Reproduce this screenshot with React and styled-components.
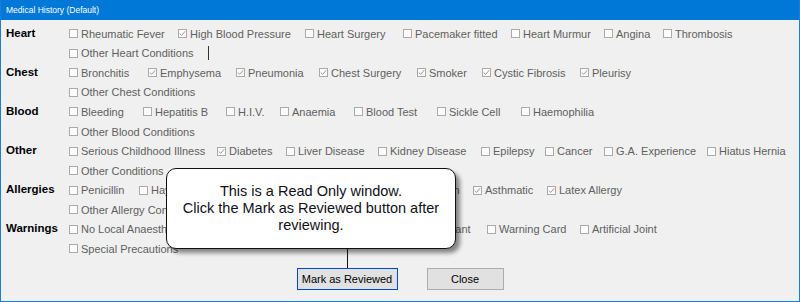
import React from 'react';
import styled, { createGlobalStyle } from 'styled-components';

const GlobalStyle = createGlobalStyle`
    html, body {
        margin: 0;
        padding: 0;
        background: #f0f0f0;
    }
`;

const Window = styled.div`
    position: relative;
    width: 800px;
    height: 302px;
    box-sizing: border-box;
    border: 1px solid #1a7fd4;
    border-top: none;
    background: #f0f0f0;
    font-family: "Liberation Sans", Arial, sans-serif;
    overflow: hidden;
`;

const TitleBar = styled.div`
    height: 20px;
    margin: 0 -1px;
    background: #0078d7;
    color: #fff;
    font-size: 8.5px;
    line-height: 20px;
    padding-left: 6px;
`;

const Content = styled.div`
    padding: 4px 0 0 5px;
`;

const Section = styled.div`
    display: grid;
    grid-template-columns: 63px 1fr;
`;

const SectionLabel = styled.div`
    font-size: 11.5px;
    font-weight: bold;
    color: #000;
    height: 19.55px;
    line-height: 19.55px;
`;

const Lines = styled.div`
    display: flex;
    flex-direction: column;
`;

const Line = styled.div`
    display: flex;
    align-items: center;
    height: 19.55px;
`;

const Item = styled.label`
    display: flex;
    align-items: center;
    flex: 0 0 auto;
    width: ${(p) => (p.$w ? `${p.$w}px` : 'auto')};
    font-size: 11px;
    color: #5f5f5f;
    white-space: nowrap;
`;

const Box = styled.span`
    display: inline-flex;
    align-items: center;
    justify-content: center;
    width: 9px;
    height: 9px;
    box-sizing: border-box;
    border: 1px solid #aaaaaa;
    background: #fbfbfb;
    margin-right: 3px;
`;

const Caret = styled.span`
    display: inline-block;
    width: 1px;
    height: 14px;
    margin-left: 14px;
    background: #333;
`;

const ButtonRow = styled.div`
    display: flex;
    justify-content: center;
    gap: 29px;
    margin-top: 9px;
    padding-right: 5px;
`;

const Button = styled.button`
    width: ${(p) => p.$w}px;
    height: 22px;
    box-sizing: border-box;
    background: #e1e1e1;
    border: 1px solid ${(p) => (p.$focused ? '#0046d5' : '#adadad')};
    box-shadow: ${(p) => (p.$focused ? 'inset 0 0 0 1px #e1e1e1' : 'none')};
    font-family: "Liberation Sans", Arial, sans-serif;
    font-size: 11px;
    color: #000;
    padding: 0;
`;

const Callout = styled.div`
    position: absolute;
    left: 165px;
    top: 168px;
    width: 290px;
    height: 81px;
    box-sizing: border-box;
    background: #fff;
    border: 1px solid #111;
    border-radius: 10px;
    box-shadow: 4px 4px 4px rgba(0, 0, 0, 0.45);
    display: flex;
    align-items: center;
    justify-content: center;
    text-align: center;
    font-size: 14.5px;
    line-height: 17px;
    color: #101020;
    padding: 0 6px;
`;

const Tail = styled.div`
    position: absolute;
    left: 346px;
    top: 249px;
    width: 1px;
    height: 19px;
    background: #111;
`;

const Tick = () => (
    <svg width="7" height="7" viewBox="0 0 7 7">
        <path d="M0.8 3.6 L2.7 5.4 L6.2 1.2" fill="none" stroke="#9a9a9a" strokeWidth="1" />
    </svg>
);

const sections = [
    {
        label: 'Heart',
        lines: [
            [
                ['Rheumatic Fever', 0, 109],
                ['High Blood Pressure', 1, 127],
                ['Heart Surgery', 0, 98],
                ['Pacemaker fitted', 0, 108],
                ['Heart Murmur', 0, 93],
                ['Angina', 0, 59],
                ['Thrombosis', 0],
            ],
            [['Other Heart Conditions', 0]],
        ],
        caret: true,
    },
    {
        label: 'Chest',
        lines: [
            [
                ['Bronchitis', 0, 79],
                ['Emphysema', 1, 88],
                ['Pneumonia', 1, 83],
                ['Chest Surgery', 1, 98],
                ['Smoker', 1, 65],
                ['Cystic Fibrosis', 1, 98],
                ['Pleurisy', 1],
            ],
            [['Other Chest Conditions', 0]],
        ],
    },
    {
        label: 'Blood',
        lines: [
            [
                ['Bleeding', 0, 74],
                ['Hepatitis B', 0, 83],
                ['H.I.V.', 0, 54],
                ['Anaemia', 0, 74],
                ['Blood Test', 0, 83],
                ['Sickle Cell', 0, 84],
                ['Haemophilia', 0],
            ],
            [['Other Blood Conditions', 0]],
        ],
    },
    {
        label: 'Other',
        lines: [
            [
                ['Serious Childhood Illness', 0, 148],
                ['Diabetes', 1, 69],
                ['Liver Disease', 0, 92],
                ['Kidney Disease', 0, 103],
                ['Epilepsy', 0, 64],
                ['Cancer', 0, 59],
                ['G.A. Experience', 0, 103],
                ['Hiatus Hernia', 0],
            ],
            [['Other Conditions', 0]],
        ],
    },
    {
        label: 'Allergies',
        lines: [
            [
                ['Penicillin', 0, 70],
                ['Hay Fever', 0, 80],
                ['Elastoplast', 0, 88],
                ['Iodine', 0, 107],
                ['Aspirin', 0, 59],
                ['Asthmatic', 1, 74],
                ['Latex Allergy', 1],
            ],
            [['Other Allergy Conditions', 0]],
        ],
    },
    {
        label: 'Warnings',
        lines: [
            [
                ['No Local Anaesthetic', 0, 140],
                ['Blood Thinners', 0, 205],
                ['Pregnant', 0, 73],
                ['Warning Card', 0, 93],
                ['Artificial Joint', 0],
            ],
            [['Special Precautions', 0]],
        ],
    },
];

const App = () => (
    <>
        <GlobalStyle />
        <Window>
            <TitleBar>Medical History (Default)</TitleBar>
            <Content>
                {sections.map((s) => (
                    <Section key={s.label}>
                        <SectionLabel>{s.label}</SectionLabel>
                        <Lines>
                            {s.lines.map((line, i) => (
                                <Line key={i}>
                                    {line.map(([text, checked, w]) => (
                                        <Item key={text} $w={w}>
                                            <Box>{checked ? <Tick /> : null}</Box>
                                            {text}
                                        </Item>
                                    ))}
                                    {s.caret && i === 1 && <Caret />}
                                </Line>
                            ))}
                        </Lines>
                    </Section>
                ))}
                <ButtonRow>
                    <Button $w={101} $focused>Mark as Reviewed</Button>
                    <Button $w={77}>Close</Button>
                </ButtonRow>
            </Content>
            <Callout>
                This is a Read Only window.
                <br />
                Click the Mark as Reviewed button after reviewing.
            </Callout>
            <Tail />
        </Window>
    </>
);

export default App;
